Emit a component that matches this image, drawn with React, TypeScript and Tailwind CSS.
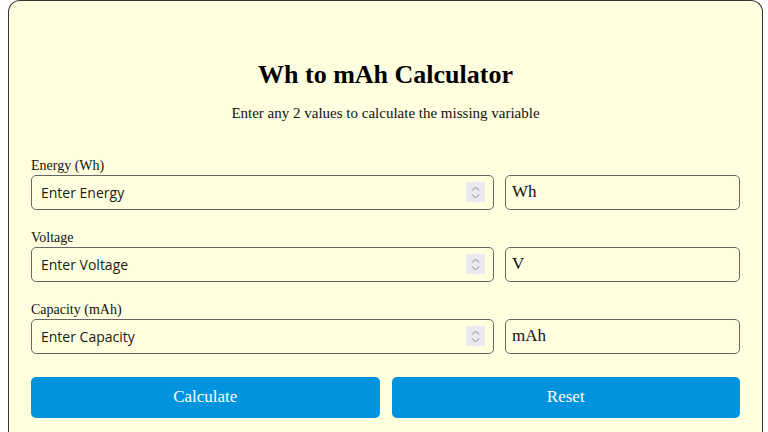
import { useState } from 'react';

interface Field {
    key: string;
    label: string;
    placeholder: string;
    unit: string;
}

const FIELDS: Field[] = [
    { key: 'energy', label: 'Energy (Wh)', placeholder: 'Enter Energy', unit: 'Wh' },
    { key: 'voltage', label: 'Voltage', placeholder: 'Enter Voltage', unit: 'V' },
    { key: 'capacity', label: 'Capacity (mAh)', placeholder: 'Enter Capacity', unit: 'mAh' },
];

const Spinner = () => (
    <div className="absolute right-[9px] top-1/2 -translate-y-1/2 w-[19px] h-[20px] bg-[#e9e9ed] flex flex-col items-center justify-center gap-[3px]">
        <svg width="9" height="5" viewBox="0 0 9 5" fill="none">
            <path d="M1 4.5L4.5 1L8 4.5" stroke="#8a8a8a" strokeWidth="1" />
        </svg>
        <svg width="9" height="5" viewBox="0 0 9 5" fill="none">
            <path d="M1 0.5L4.5 4L8 0.5" stroke="#8a8a8a" strokeWidth="1" />
        </svg>
    </div>
);

export default function App() {
    const [values, setValues] = useState<Record<string, string>>({});

    return (
        <div className="min-h-[432px] bg-white ml-2 mr-[5px] font-['Liberation_Serif',serif] text-[#111]">
            <div className="bg-[#ffffe0] border border-[#333] rounded-t-xl border-b-0 px-[22px] pt-[58px] pb-6 min-h-[432px]">
                <h1 className="text-center text-[26px] font-bold leading-8 text-black">Wh to mAh Calculator</h1>
                <p className="text-center text-[15px] mt-[11px] mb-[32px]">Enter any 2 values to calculate the missing variable</p>

                <div className="flex flex-col gap-[19px]">
                    {FIELDS.map(f => (
                        <div key={f.key}>
                            <label className="block text-[14px] leading-[18px]">{f.label}</label>
                            <div className="flex gap-[11px]">
                                <div className="relative w-[463px]">
                                    <input
                                        type="text"
                                        inputMode="decimal"
                                        value={values[f.key] || ''}
                                        onChange={e => setValues({ ...values, [f.key]: e.target.value })}
                                        placeholder={f.placeholder}
                                        className="w-full h-[35px] border border-[#666] rounded-[5px] bg-transparent pl-[9px] pr-8 text-[14px] font-['Open_Sans',sans-serif] text-[#111] placeholder:text-[#1a1a1a] outline-none"
                                    />
                                    <Spinner />
                                </div>
                                <input
                                    type="text"
                                    readOnly
                                    value={f.unit}
                                    className="flex-1 h-[35px] border border-[#666] rounded-[5px] bg-transparent px-[6px] text-[17px] font-['Liberation_Serif',serif] text-[#111] outline-none"
                                />
                            </div>
                        </div>
                    ))}
                </div>

                <div className="flex gap-[12px] mt-[23px]">
                    <button className="flex-1 h-[41px] rounded-[5px] bg-[#0093dd] text-white text-[17px]">Calculate</button>
                    <button
                        onClick={() => setValues({})}
                        className="flex-1 h-[41px] rounded-[5px] bg-[#0093dd] text-white text-[17px]"
                    >
                        Reset
                    </button>
                </div>
            </div>
        </div>
    );
}
